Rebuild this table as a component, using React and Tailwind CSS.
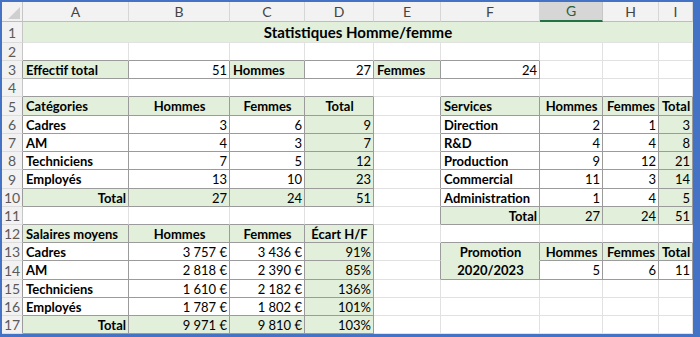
import React from 'react';

const COLS = ['A', 'B', 'C', 'D', 'E', 'F', 'G', 'H', 'I'];

// cell helpers
const GL = (t) => ({ t, b: true, al: 'l', g: true, tb: true });
const L = (t) => ({ t, b: true, al: 'l', tb: true });
const H = (t) => ({ t, b: true, al: 'c', g: true, tb: true });
const N = (t) => ({ t, al: 'r', tb: true });
const G = (t) => ({ t, al: 'r', g: true, tb: true });
const TOT = { t: 'Total', b: true, al: 'r', g: true, tb: true };
const E = null;
const eur = (v) => `${v}\u00a0€`;

// rows 2..17 (row 1 is the merged title)
const ROWS = [
  [E, E, E, E, E, E, E, E, E],
  [GL('Effectif total'), N('51'), GL('Hommes'), N('27'), GL('Femmes'), N('24'), E, E, E],
  [E, E, E, E, E, E, E, E, E],
  [GL('Catégories'), H('Hommes'), H('Femmes'), H('Total'), E, GL('Services'), H('Hommes'), H('Femmes'), H('Total')],
  [L('Cadres'), N('3'), N('6'), G('9'), E, L('Direction'), N('2'), N('1'), G('3')],
  [L('AM'), N('4'), N('3'), G('7'), E, L('R&D'), N('4'), N('4'), G('8')],
  [L('Techniciens'), N('7'), N('5'), G('12'), E, L('Production'), N('9'), N('12'), G('21')],
  [L('Employés'), N('13'), N('10'), G('23'), E, L('Commercial'), N('11'), N('3'), G('14')],
  [TOT, G('27'), G('24'), G('51'), E, L('Administration'), N('1'), N('4'), G('5')],
  [E, E, E, E, E, TOT, G('27'), G('24'), G('51')],
  [GL('Salaires moyens'), H('Hommes'), H('Femmes'), H('Écart H/F'), E, E, E, E, E],
  [L('Cadres'), N(eur('3\u00a0757')), N(eur('3\u00a0436')), G('91%'), E, { t: 'Promotion', b: true, al: 'c', g: true, tb: true, nb: true }, H('Hommes'), H('Femmes'), H('Total')],
  [L('AM'), N(eur('2\u00a0818')), N(eur('2\u00a0390')), G('85%'), E, { t: '2020/2023', b: true, al: 'c', g: true, tb: true }, N('5'), N('6'), N('11')],
  [L('Techniciens'), N(eur('1\u00a0610')), N(eur('2\u00a0182')), G('136%'), E, E, E, E, E],
  [L('Employés'), N(eur('1\u00a0787')), N(eur('1\u00a0802')), G('101%'), E, E, E, E, E],
  [TOT, G(eur('9\u00a0971')), G(eur('9\u00a0810')), G('103%'), E, E, E, E, E],
];

const inTable = (r, c) => !!(ROWS[r] && ROWS[r][c] && ROWS[r][c].tb);

function Cell({ r, c }) {
  const cell = ROWS[r][c];
  const darkR = inTable(r, c) || inTable(r, c + 1);
  const darkB = inTable(r, c) || inTable(r + 1, c);
  let bcol = darkB ? 'border-b-[#9b9b9b]' : 'border-b-[#e1e1e1]';
  if (cell && cell.nb) bcol = 'border-b-[#e2efda]';
  const rcol = darkR ? 'border-r-[#9b9b9b]' : 'border-r-[#e1e1e1]';
  const al = !cell ? '' : cell.al === 'r' ? 'justify-end' : cell.al === 'c' ? 'justify-center' : 'justify-start';
  return (
    <div
      className={`flex items-center overflow-hidden whitespace-nowrap border-r border-b pl-[3px] pr-[2px] pt-px text-[13px] leading-none text-black ${rcol} ${bcol} ${al} ${
        cell && cell.g ? 'bg-[#e2efda]' : 'bg-white'
      } ${cell && cell.b ? 'font-bold' : 'font-normal'}`}
    >
      {cell ? cell.t : ''}
    </div>
  );
}

function RowHead({ n, dark }) {
  return (
    <div
      className={`flex items-center justify-center border-r border-b border-b-[#dcdcdc] bg-[#f2f2f2] pt-px text-[14px] leading-none text-[#5a5a5a] ${
        dark ? 'border-r-[#9b9b9b]' : 'border-r-[#c6c6c6]'
      }`}
    >
      {n}
    </div>
  );
}

export default function App() {
  return (
    <div
      className="h-[337px] w-[700px] overflow-hidden border-b-[3px] border-l-2 border-r-[7px] border-t-2 border-[#4472c4] bg-white"
      style={{ fontFamily: 'Lato, "Liberation Sans", sans-serif' }}
    >
      <div className="grid grid-cols-[21px_106px_101px_75px_69px_67px_99px_63px_56px_34px] grid-rows-[20px_21px_18px_18px_18px_19px_18px_18px_18px_19px_18px_18px_18px_18px_19px_18px_18px_18px]">
        {/* corner */}
        <div className="relative border-r border-b border-r-[#c6c6c6] border-b-[#bdbdbd] bg-[#f2f2f2]">
          <svg className="absolute bottom-[2px] right-[2px]" width="12" height="12" viewBox="0 0 12 12">
            <polygon points="12,0 12,12 0,12" fill="#cfcfcf" />
          </svg>
        </div>
        {/* column headers */}
        {COLS.map((l) =>
          l === 'G' ? (
            <div
              key={l}
              className="flex items-center justify-center border-r border-b-2 border-r-[#c6c6c6] border-b-[#217346] bg-[#d6d6d6] text-[14px] leading-none text-[#2b5e3f]"
            >
              {l}
            </div>
          ) : (
            <div
              key={l}
              className="flex items-center justify-center border-r border-b border-r-[#d6d6d6] border-b-[#bdbdbd] bg-[#f2f2f2] text-[14px] leading-none text-[#444]"
            >
              {l}
            </div>
          )
        )}

        {/* row 1 : title */}
        <RowHead n={1} />
        <div className="col-span-9 flex items-center justify-center border-b border-b-[#e1e1e1] bg-[#e2efda] pt-px text-[15px] font-bold leading-none text-black">
          Statistiques Homme/femme
        </div>

        {/* rows 2..17 */}
        {ROWS.map((row, r) => (
          <React.Fragment key={r}>
            <RowHead n={r + 2} dark={inTable(r, 0)} />
            {row.map((_, c) => (
              <Cell key={c} r={r} c={c} />
            ))}
          </React.Fragment>
        ))}
      </div>
    </div>
  );
}
